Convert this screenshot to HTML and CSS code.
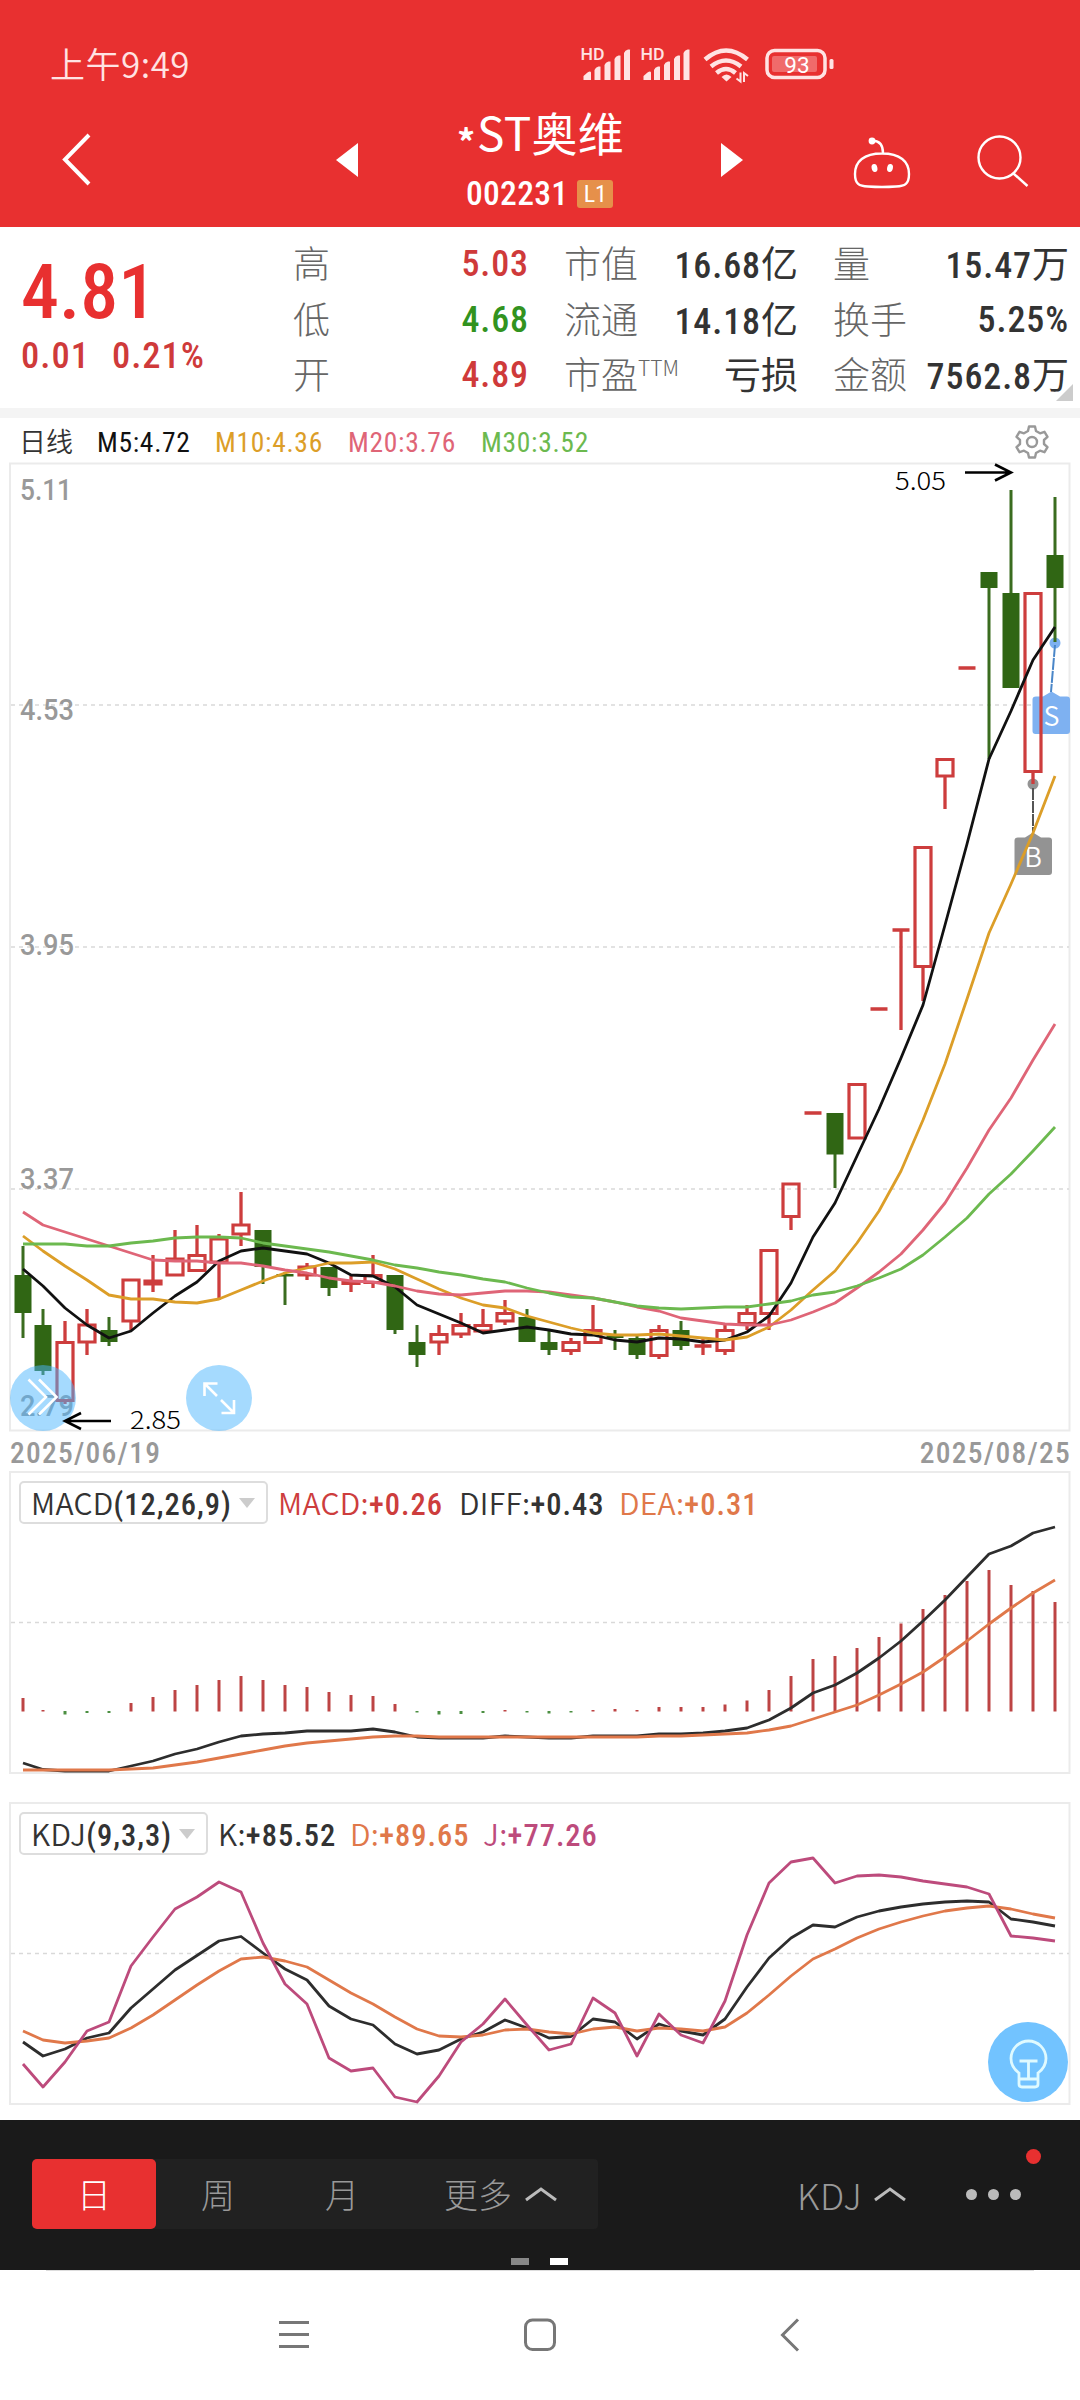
FILE: index.html
```html
<!DOCTYPE html>
<html lang="zh-CN">
<head>
<meta charset="utf-8">
<title>*ST奥维 002231</title>
<link rel="stylesheet" href="styles.css">
</head>
<body>
<header class="header">
  <div class="status">
    <span class="clock">上午9:49</span>
    <svg class="status-icons" width="256" height="40" viewBox="580 44 256 40">
      <g fill="#ffe3e3">
        <text class="hd" x="580.500" y="60" textLength="24" lengthAdjust="spacingAndGlyphs">HD</text>
        <text class="hd" x="640.500" y="60" textLength="24" lengthAdjust="spacingAndGlyphs">HD</text>
        <path transform="translate(3.500 0)" d="M580 80v-4l4-3.500q3-2 3.500 0v7.500zM591 80v-10q1-3 4-3.500t2 1v12.500zM601 80v-15q1-3 4-3.500t2 1v17.500zM611 80v-21q1-3 4-3.500t2 1v23.500zM620.500 80v-27q1-3 4-3.500t2 1v29.500z"/>
        <path transform="translate(5 0)" d="M638.500 80v-4l4-3.500q3-2 3.500 0v7.500zM649 80v-10q1-3 4-3.500t2 1v12.500zM659 80v-15q1-3 4-3.500t2 1v17.500zM669 80v-21q1-3 4-3.500t2 1v23.500zM678.500 80v-27q1-3 4-3.500t2 1v29.500z"/>
        <path d="M721.500 77q5-5 10 0l-5 4.500z"/>
      </g>
      <g transform="translate(-.5 0)" fill="none" stroke="#ffe3e3">
        <path stroke-width="4.500" d="M705.500 59.500q21-18 42.500 0M711.500 66.500q15-12 30 0M717 73q9.500-8 19 0"/>
        <path stroke-width="2" d="M741 72.500v9l-4-3M744.500 82v-9l4 3"/>
        <rect x="767.500" y="50.500" width="58" height="27" rx="7.500" stroke-width="3.500"/>
      </g>
      <rect x="772" y="56" width="45" height="16" rx="2" fill="#f06b6b"/>
      <rect x="829.500" y="59" width="4" height="10" rx="1.500" fill="#ffe3e3"/>
      <text class="batt" x="797" y="73" text-anchor="middle">93</text>
    </svg>
  </div>
  <div class="titlebar">
    <svg class="back" width="40" height="60" viewBox="56 130 40 60"><path d="M89 135 65 159.500 89 184" fill="none" stroke="#fff" stroke-width="4"/></svg>
    <svg class="tri" width="22" height="36" viewBox="0 0 22 36"><path d="M22 1v34L0 18z" fill="#fff"/></svg>
    <div class="title">
      <div class="name"><b>*</b>ST奥维</div>
      <div class="code"><span>002231</span><i>L1</i></div>
    </div>
    <svg class="tri" width="22" height="36" viewBox="0 0 22 36"><path d="M0 1v34l22-17z" fill="#fff"/></svg>
    <svg class="tools" width="180" height="60" viewBox="850 132 180 60" fill="none" stroke="#fff" stroke-width="2.400">
      <path d="M882 153.500c18 0 27 8 27 20.500 0 10-4 12-13 12.500q-14 1-28 0c-9-.5-13-2.500-13-12.500 0-12.500 9-20.500 27-20.500zM883 153c0-8-3-12-10-12.500"/>
      <circle cx="872" cy="141" r="3.400" fill="#fff" stroke="none"/>
      <ellipse cx="874.500" cy="168" rx="2.900" ry="4" transform="rotate(-12 874.500 168)" fill="#fff" stroke="none"/>
      <ellipse cx="890" cy="168" rx="2.900" ry="4" transform="rotate(12 890 168)" fill="#fff" stroke="none"/>
      <circle cx="999.500" cy="157.500" r="21"/><path d="m1013.500 173.500 14 12.500"/>
    </svg>
  </div>
</header>

<section class="quote">
  <div class="price">
    <div class="last">4.81</div>
    <div class="change"><span>0.01</span><span>0.21%</span></div>
  </div>
  <dl class="stats c1">
    <div><dt>高</dt><dd class="up">5.03</dd></div>
    <div><dt>低</dt><dd class="down">4.68</dd></div>
    <div><dt>开</dt><dd class="up">4.89</dd></div>
  </dl>
  <dl class="stats c2">
    <div><dt>市值</dt><dd>16.68<em>亿</em></dd></div>
    <div><dt>流通</dt><dd>14.18<em>亿</em></dd></div>
    <div><dt>市盈<sup>TTM</sup></dt><dd><em>亏损</em></dd></div>
  </dl>
  <dl class="stats c3">
    <div><dt>量</dt><dd>15.47<em>万</em></dd></div>
    <div><dt>换手</dt><dd>5.25%</dd></div>
    <div><dt>金额</dt><dd>7562.8<em>万</em></dd></div>
  </dl>
  <span class="corner"></span>
</section>

<div class="legend">
  <span class="period">日线</span><span class="m5">M5:4.72</span><span class="m10">M10:4.36</span><span class="m20">M20:3.76</span><span class="m30">M30:3.52</span>
  <svg class="gear" width="36" height="36" viewBox="0 0 36 36" fill="none" stroke="#999" stroke-width="2.400" stroke-linejoin="round"><path d="M15 2.500h6l1 4.500 4 2.300 4.500-1.500 3 5-3.500 3.200v4l3.500 3.200-3 5-4.500-1.500-4 2.300-1 4.500h-6l-1-4.500-4-2.300-4.500 1.500-3-5L6 20v-4l-3.500-3.200 3-5L10 9.300 14 7z"/><circle cx="18" cy="18" r="5"/></svg>
</div>

<svg class="kline" width="1080" height="970" viewBox="0 462 1080 970">
  <rect class="frame" x="10" y="463.500" width="1059.500" height="967"/>
  <path class="grid" d="M11 705H1069M11 947H1069M11 1189H1069"/>
  <g class="axis">
    <text x="20" y="500" textLength="52" lengthAdjust="spacingAndGlyphs">5.11</text>
    <text x="20" y="719.500" textLength="54" lengthAdjust="spacingAndGlyphs">4.53</text>
    <text x="20" y="954.500" textLength="54" lengthAdjust="spacingAndGlyphs">3.95</text>
    <text x="20" y="1188.500" textLength="54" lengthAdjust="spacingAndGlyphs">3.37</text>
    <text x="20" y="1416" textLength="54" lengthAdjust="spacingAndGlyphs">2.79</text>
  </g>
  <g class="marker">
    <path fill="#7eb1f1" d="M1036 696.500h7l8.500-5 8.500 5h7q3 0 3 3v31.500q0 3-3 3h-31.500q-3 0-3-3v-31.500q0-3 3.500-3z"/>
    <path fill="#939393" d="M1018 837.500h7l8-5 8 5h8q3 0 3 3v31.500q0 3-3 3h-31.500q-3 0-3-3v-31.500q0-3 3.500-3z"/>
    <circle cx="1055" cy="643" r="5.500" fill="#7eb1f1"/><circle cx="1033" cy="784" r="5.500" fill="#939393"/>
    <path d="M1055 645 1051 692" stroke="#4a86c8" stroke-width="2" stroke-dasharray="12 1"/>
    <path d="M1033 788V833" stroke="#555" stroke-width="2" stroke-dasharray="12 1"/>
    <text x="1051.500" y="726">S</text><text x="1033" y="867">B</text>
  </g>
  <path class="gw" d="M23 1246V1338M43 1309V1375M109 1317V1346M263 1230V1284M285 1272V1305M329 1267V1296M395 1275V1334M417 1325V1367M527 1309V1342M549 1330V1355M615 1330V1350M637 1336V1359M681 1321V1350M835 1113V1188M989 572V759M1011 490V688M1055 497V642"/>
  <path class="gb" d="M14.500 1275h17v38h-17zM34.500 1325h17v46h-17zM100.500 1330h17v12h-17zM254.500 1230h17v37h-17zM276.500 1274h17v2.500h-17zM320.500 1267h17v21h-17zM386.500 1275h17v55h-17zM408.500 1342h17v13h-17zM518.500 1317h17v25h-17zM540.500 1342h17v8h-17zM606.500 1335.500h17v2.500h-17zM628.500 1338h17v17h-17zM672.500 1330h17v16h-17zM826.500 1113h17v41.500h-17zM980.500 572h17v16h-17zM1002.500 593h17v95h-17zM1046.500 555h17v33h-17z"/>
  <path class="rw" d="M65 1321V1342M65 1401V1404M87 1309V1325M87 1342V1355M131 1321V1330M153 1255V1292M175 1230V1259M197 1225V1255M219 1234V1239M219 1262V1300M241 1192V1225M241 1234V1246M307 1263V1267M307 1275V1280M351 1276V1292M373 1255V1275M373 1284V1288M439 1325V1334M439 1342V1355M461 1313V1325M461 1334V1338M483 1309V1325M505 1300V1313M505 1321V1325M571 1338V1342M571 1351V1355M593 1305V1330M659 1325V1330M659 1355V1359M703 1339V1355M725 1325V1330M725 1351V1355M747 1305V1313M747 1324V1330M769 1313V1330M791 1217V1230M901 930V1030M923 967V1001M945 777V809M1033 772V784"/>
  <path class="rb" d="M57 1342.500h16v58h-16zM79 1325h16v17h-16zM123 1280h16v41h-16zM145 1281h16v3h-16zM167 1259h16v16h-16zM189 1255.500h16v15h-16zM211 1239h16v23h-16zM233 1225h16v9h-16zM299 1267h16v8h-16zM343 1281.500h16v2h-16zM365 1275.500h16v7h-16zM431 1334.500h16v7.500h-16zM453 1325.500h16v8.500h-16zM475 1325.500h16v5.500h-16zM497 1313.500h16v7.500h-16zM563 1342.500h16v8h-16zM585 1330.500h16v12h-16zM651 1330.500h16v25h-16zM717 1330.500h16v20h-16zM739 1313.500h16v10h-16zM761 1250.500h16v63h-16zM783 1184h16v32.500h-16zM849 1084.500h16v53.500h-16zM915 847.500h16v119h-16zM937 759.500h16v16.500h-16zM1025 593.500h16v178h-16z"/>
  <path class="rd" d="M694.500 1346h17M804.500 1113h17M870.500 1009h17M892.500 930h17M958.500 668h17"/>
  <polyline class="ln l5" points="23,1269 43,1286 65,1308 87,1325 109,1338 131,1331 153,1313 175,1296 197,1282 219,1261 241,1251 263,1248 285,1251 307,1254 329,1263 351,1275 373,1276 395,1287 417,1305 439,1314 461,1323 483,1333 505,1330 527,1327 549,1330 571,1334 593,1335 615,1340 637,1342 659,1338 681,1339 703,1342 725,1340 747,1332 769,1316 791,1283 813,1237 835,1203 857,1156 879,1109 901,1058 923,1005 945,925 967,844 989,759 1011,711 1033,660 1055,627"/>
  <polyline class="ln l10" points="23,1236 43,1251 65,1266 87,1280 109,1295 131,1299 153,1299 175,1302 197,1303 219,1299 241,1290 263,1281 285,1273 307,1268 329,1263 351,1263 373,1262 395,1269 417,1279 439,1289 461,1298 483,1305 505,1308 527,1316 549,1322 571,1328 593,1333 615,1335 637,1335 659,1334 681,1336 703,1338 725,1340 747,1337 769,1327 791,1310 813,1290 835,1271 857,1243 879,1211 901,1171 923,1120 945,1064 967,999 989,933 1011,884 1033,833 1055,776"/>
  <polyline class="ln l20" points="23,1212 43,1225 65,1232 87,1239 109,1246 131,1253 153,1260 175,1261 197,1261 219,1263 241,1263 263,1266 285,1270 307,1273 329,1278 351,1281 373,1282 395,1286 417,1291 439,1294 461,1295 483,1293 505,1291 527,1291 549,1292 571,1295 593,1298 615,1302 637,1307 659,1311 681,1318 703,1321 725,1324 747,1325 769,1325 791,1320 813,1312 835,1303 857,1288 879,1272 901,1254 923,1230 945,1203 967,1168 989,1130 1011,1098 1033,1060 1055,1024"/>
  <polyline class="ln l30" points="23,1244 65,1244 87,1246 109,1246 131,1243 153,1241 175,1238 197,1237 219,1237 241,1238 263,1243 285,1246 307,1249 329,1252 351,1256 373,1260 395,1265 417,1268 439,1272 461,1275 483,1279 505,1282 527,1288 549,1293 571,1297 593,1298 615,1302 637,1306 659,1308 681,1309 703,1308 725,1307 747,1307 769,1304 791,1301 813,1295 835,1292 857,1286 879,1278 901,1269 923,1255 945,1237 967,1218 989,1194 1011,1174 1033,1151 1055,1127"/>
  <g fill="rgba(75,181,253,.5)"><circle cx="43" cy="1398" r="33"/><circle cx="219" cy="1398" r="33"/></g>
  <path d="M28.500 1379.500 46 1397 28.500 1414.500M39 1379.500 56.500 1397 39 1414.500M217 1396 204.500 1383.500M204.500 1396V1383.500H217.500M221 1400 234 1413M221.500 1413H234V1400" fill="none" stroke="#fff" stroke-width="2.600"/>
  <path d="M965 472.500H1010M995 464.500 1011 472.500 995 480.500M111 1421H67M81 1413 65 1421 81 1429" fill="none" stroke="#000" stroke-width="2.600"/>
  <g class="extreme">
    <text x="895" y="490" textLength="51" lengthAdjust="spacingAndGlyphs">5.05</text>
    <text x="130" y="1428.500" textLength="51" lengthAdjust="spacingAndGlyphs">2.85</text>
  </g>
</svg>

<div class="dates"><span>2025/06/19</span><span>2025/08/25</span></div>

<section class="panel">
  <svg class="plot" width="1080" height="303" viewBox="0 1471 1080 303">
    <rect class="frame" x="10" y="1472" width="1059.500" height="301"/>
    <path class="grid" d="M11 1622.500H1069"/>
    <path class="hr" d="M23 1711.500V1698M43 1711.500V1710M131 1711.500V1703M153 1711.500V1697M175 1711.500V1690M197 1711.500V1685M219 1711.500V1680M241 1711.500V1676M263 1711.500V1680M285 1711.500V1685M307 1711.500V1687M329 1711.500V1692M351 1711.500V1695M373 1711.500V1696M395 1711.500V1704M505 1711.500V1710M593 1711.500V1710M615 1711.500V1709M637 1711.500V1710M659 1711.500V1707M681 1711.500V1707M703 1711.500V1707M725 1711.500V1704.500M747 1711.500V1700.500M769 1711.500V1690M791 1711.500V1676M813 1711.500V1659M835 1711.500V1656M857 1711.500V1648M879 1711.500V1637M901 1711.500V1623.500M923 1711.500V1609M945 1711.500V1595M967 1711.500V1581M989 1711.500V1570M1011 1711.500V1585M1033 1711.500V1591M1055 1711.500V1602"/>
    <path class="hg" d="M65 1711V1714.500M87 1711V1713M109 1711V1713M417 1711V1712.500M439 1711V1714.500M461 1711V1714M483 1711V1713M527 1711V1712.500M549 1711V1713.500M571 1711V1712.500"/>
    <polyline class="ln dk" points="23,1763 43,1769.500 65,1771 109,1771 131,1766 153,1761 175,1754 197,1749 219,1742 241,1736 263,1734 285,1733 307,1731 351,1731 373,1729 395,1732 417,1737 439,1738 483,1738 505,1736 527,1737 549,1738 571,1738 593,1736 637,1736 659,1734 681,1734 703,1733 725,1731 747,1728 769,1720 791,1708 813,1693 835,1685 857,1673 879,1658 901,1641 923,1621 945,1600 967,1577 989,1554 1011,1546 1033,1533 1055,1527"/>
    <polyline class="ln or" points="23,1770 109,1770 131,1769 153,1768 175,1765 197,1762 219,1758 241,1754 263,1750 285,1746 307,1743 329,1741 351,1739 373,1737 395,1736 417,1736 439,1737 637,1737 659,1736 681,1736 703,1735 725,1734 747,1733 769,1730 791,1726 813,1719 835,1712 857,1705 879,1695 901,1684 923,1672 945,1657 967,1641 989,1624 1011,1608 1033,1593 1055,1580"/>
  </svg>
  <div class="readout">
    <span class="select" style="width:249px"><span>MACD<b>(12,26,9)</b></span></span>
    <span class="v1 red">MACD:<b>+0.26</b></span><span class="v2">DIFF:<b>+0.43</b></span><span class="v3 orange">DEA:<b>+0.31</b></span>
  </div>
</section>

<section class="panel kdj">
  <svg class="plot" width="1080" height="303" viewBox="0 1802 1080 303">
    <rect class="frame" x="10" y="1803" width="1059.500" height="301"/>
    <path class="grid" d="M11 1953.500H1069"/>
    <polyline class="ln dk" points="23,2042 43,2056 65,2049 87,2038 109,2033 131,2008 153,1989 175,1970 197,1955.500 219,1941 241,1936.500 263,1953 285,1969 307,1980 329,2006 351,2019 373,2025 395,2044 417,2054 439,2050 461,2039 483,2032 505,2020 527,2028 549,2038 571,2036.500 593,2019 615,2022 637,2039 659,2024 681,2031 703,2035 725,2019 747,1987 769,1958 791,1938 813,1925 835,1927 857,1917 879,1911 901,1907 923,1904 945,1902 967,1901 989,1902 1011,1919 1033,1922 1055,1926"/>
    <polyline class="ln or" points="23,2031 43,2040 65,2043 87,2041 109,2038 131,2028 153,2015 175,2000 197,1985 219,1971 241,1959 263,1957 285,1961 307,1967 329,1980 351,1993 373,2004 395,2017 417,2029 439,2036 461,2037 483,2035 505,2030 527,2029 549,2032 571,2034 593,2029 615,2027 637,2031 659,2028 681,2029 703,2031 725,2027 747,2013 769,1995 791,1976 813,1959 835,1949 857,1938 879,1929 901,1922 923,1916 945,1911 967,1908 989,1906 1011,1909 1033,1914 1055,1918"/>
    <polyline class="ln pu" points="23,2064 43,2087 65,2062 87,2031 109,2022 131,1966 153,1937 175,1909 197,1897 219,1882 241,1892 263,1943 285,1984 307,2004 329,2058 351,2071 373,2068 395,2097 417,2102 439,2076 461,2042 483,2024 505,1999 527,2025 549,2050 571,2044 593,1998 615,2013 637,2056 659,2014 681,2035 703,2043 725,2001 747,1935 769,1883 791,1862 813,1858 835,1883 857,1876 879,1875 901,1877 923,1881 945,1884 967,1887 989,1894 1011,1936 1033,1938 1055,1941"/>
    <circle cx="1028" cy="2062" r="40" fill="#72c3ff"/>
    <path d="M1019 2084v-11c-4-3-8-8-8-14.500a17.500 17.500 0 0 1 35 0c0 6.500-4 11.500-8 14.500v11q0 3-3 3h-13q-3 0-3-3zM1020 2079h17M1019.500 2061h18M1028.500 2061v17" fill="none" stroke="#dffaff" stroke-width="2.800"/>
  </svg>
  <div class="readout">
    <span class="select" style="width:189px"><span>KDJ<b>(9,3,3)</b></span></span>
    <span class="k1">K:<b>+85.52</b></span><span class="k2 orange">D:<b>+89.65</b></span><span class="k3 purple">J:<b>+77.26</b></span>
  </div>
</section>

<nav class="toolbar">
  <div class="segments">
    <span class="on">日</span><span>周</span><span>月</span>
    <span class="more">更多<svg width="34" height="16" viewBox="0 0 34 16"><path d="M2 14 17 3 32 14" fill="none" stroke="#bbb" stroke-width="3"/></svg></span>
  </div>
  <span class="indicator"><span>KDJ</span><svg width="34" height="16" viewBox="0 0 34 16"><path d="M2 14 17 3 32 14" fill="none" stroke="#bbb" stroke-width="3"/></svg></span>
  <span class="dots"><i></i><i></i><i></i></span>
  <span class="badge"></span>
  <div class="pager"><i></i><i></i></div>
</nav>
<footer class="sysnav">
  <svg width="1080" height="130" viewBox="0 2270 1080 130" fill="none" stroke="#777" stroke-width="3">
    <path d="M46 2270.500H1034" stroke="#ddd" stroke-width="1"/>
    <path d="M279 2322.500H309M279 2334.500H309M279 2346.500H309"/>
    <rect x="525.500" y="2320" width="29" height="29.500" rx="7"/>
    <path d="M798 2319.500 782.500 2335 798 2350.500"/>
  </svg>
</footer>
</body>
</html>
```

FILE: styles.css
```css
* { box-sizing: border-box; }
body {
  margin: 0;
  width: 1080px;
  height: 2400px;
  background: #fff;
  color: #333;
  font-family: Roboto, "Noto Sans CJK SC", sans-serif;
  font-stretch: 87%;
  overflow: hidden;
}
svg { display: block; flex: none; }
i, b, em { font-style: normal; }

.header { height: 227px; background: #e83030; color: #fff; }
.status { height: 104px; padding: 44px 0 0 50px; display: flex; }
.clock { width: 530px; margin-top: -1px; font: 350 35px/40px "Noto Sans CJK SC", sans-serif; color: #ffe3e3; letter-spacing: .5px; }
.status-icons { overflow: visible; }
.hd { font: 500 17px Roboto, sans-serif; }
.batt { font: 400 22.500px Roboto, sans-serif; fill: #fff; }
.titlebar { height: 123px; display: flex; }
.back { margin: 26px 240px 0 56px; }
.tri { margin-top: 38px; }
.title { width: 363px; }
.name { height: 58px; font: 400 46px/52px "Noto Sans CJK SC", sans-serif; letter-spacing: .3px; white-space: nowrap; padding: 1px 0 0 99px; }
.name b { display: inline-block; width: 20px; font-weight: 700; font-size: 36px; line-height: 40px; vertical-align: -5px; }
.code { display: flex; align-items: center; gap: 9px; padding-left: 108px; height: 46px; margin-top: 9px; }
.code span { font-size: 33.500px; line-height: 46px; font-weight: 500; letter-spacing: .3px; }
.code i { width: 36px; height: 28px; border-radius: 3px; background: #e6904a; font: 400 24px/29px Roboto; font-stretch: 87%; text-align: center; }
.tools { margin: 28px 0 0 107px; }

.quote { position: relative; height: 191px; padding-top: 9px; border-bottom: 10px solid #f4f4f4; display: flex; }
.price { width: 293px; padding: 11px 0 0 21px; color: #e83030; }
.last { height: 88px; font-size: 76px; line-height: 90px; font-weight: 500; }
.change { display: flex; gap: 22px; font-size: 36.500px; line-height: 42px; font-weight: 500; letter-spacing: 1px; color: #cf3a3a; }
.stats { margin: 0; }
.stats div { display: flex; justify-content: space-between; height: 55.500px; line-height: 55.500px; white-space: nowrap; }
.stats dt { font: 300 37px/53px "Noto Sans CJK SC", sans-serif; color: #666; }
.stats dd { margin: 0; padding-top: 1px; font-size: 36px; font-weight: 500; letter-spacing: .9px; }
.stats em { font: 400 37px/50px "Noto Sans CJK SC", sans-serif; letter-spacing: 0; }
.c1 { width: 236px; margin-right: 35px; }
.c2 { width: 234px; margin-right: 35px; }
.c3 { width: 236px; }
.up { color: #cf3a3a; }
.down { color: #32931f; }
sup { font-size: 21px; line-height: 0; vertical-align: 13px; }
.corner { position: absolute; right: 7px; bottom: 7px; border-style: solid; border-width: 0 0 17px 17px; border-color: transparent transparent #ccc; }

.legend { height: 44px; padding-left: 19px; display: flex; align-items: center; font-size: 27.500px; letter-spacing: .7px; white-space: nowrap; }
.legend span { width: 133px; line-height: 44px; padding-top: 5px; }
.legend .period { width: 78px; padding-top: 2px; font: 350 27px/44px "Noto Sans CJK SC", sans-serif; letter-spacing: 0; }
.legend .m5 { width: 118px; color: #111; }
.m10 { color: #dc9e28; }
.m20 { color: #df6577; }
.m30 { color: #6cb94f; }
.gear { margin: 4px 0 0 400px; }

.kline { overflow: visible; }
.frame { fill: none; stroke: #ebebeb; stroke-width: 2; }
.grid { stroke: #d9d9d9; stroke-width: 1.600; stroke-dasharray: 4 4; fill: none; }
.axis text { font: 500 29.500px Roboto, sans-serif; fill: #999; }
.extreme text { font: 300 25px "Noto Sans CJK SC", sans-serif; fill: #000; }
.marker text { font: 350 27px "Noto Sans CJK SC", sans-serif; fill: #fff; text-anchor: middle; }
.gw { stroke: #3a6c1f; stroke-width: 3; fill: none; }
.gb { fill: #306614; }
.rw { stroke: #cd3d3d; stroke-width: 3.300; fill: none; }
.rb { stroke: #cd3d3d; stroke-width: 3.200; fill: none; }
.rd { stroke: #cd3d3d; stroke-width: 3.300; fill: none; }
.ln { fill: none; stroke-width: 2.800; stroke-linejoin: round; }
.l5 { stroke: #111; }
.l10 { stroke: #dc9e28; }
.l20 { stroke: #df6577; }
.l30 { stroke: #6cb94f; }
.dk { stroke: #2d2d2d; }
.or { stroke: #e0784a; }
.pu { stroke: #bd4b7c; }
.hr { stroke: #bd4444; stroke-width: 3; }
.hg { stroke: #4c8f42; stroke-width: 3; }

.dates { height: 39px; padding: 2px 9px 0 10px; display: flex; justify-content: space-between; font-size: 29.500px; line-height: 38px; font-weight: 500; letter-spacing: 1.250px; color: #999; }

.panel { height: 303px; display: grid; }
.kdj { margin-top: 28px; }
.plot, .readout { grid-area: 1 / 1; }
.readout { display: flex; align-items: flex-start; padding: 10px 0 0 19px; font: 350 30px/42px "Noto Sans CJK SC", sans-serif; letter-spacing: .3px; white-space: nowrap; }
.readout b { font: 500 30.500px Roboto; font-stretch: 87%; letter-spacing: 1px; }
.select { height: 43px; padding: 0 11px 0 10px; border: 2px solid #ddd; border-radius: 5px; line-height: 38px; display: flex; align-items: center; justify-content: space-between; }
.select::after { content: ""; border: 8px solid transparent; border-top: 10px solid #ccc; border-bottom: 0; }
.v1 { margin-left: 10px; width: 181px; }
.v2 { width: 160px; }
.k1 { margin-left: 10px; width: 132px; }
.k2 { width: 133px; }
.red { color: #cd3d3d; }
.orange { color: #e0784a; }
.purple { color: #bd4b7c; }

.toolbar { position: relative; height: 150px; margin-top: 15px; padding: 39px 0 0 32px; background: #1a1a1a; color: #999; display: flex; font: 300 34px/70px "Noto Sans CJK SC", sans-serif; }
.segments { width: 566px; height: 70px; display: flex; border-radius: 4px; background: #212121; text-align: center; }
.segments > span { width: 124px; }
.segments .on { border-radius: 5px; background: #e83030; color: #fff; }
.segments .more { width: 194px; display: flex; align-items: center; padding-left: 40px; gap: 12px; }
.indicator { margin-left: 199px; width: 169px; display: flex; align-items: center; height: 70px; font-size: 36px; letter-spacing: .5px; }
.indicator span { width: 76px; }
.dots { display: flex; gap: 11px; align-items: center; height: 70px; }
.dots i { width: 11px; height: 11px; border-radius: 50%; background: #bbb; }
.badge { position: absolute; left: 1026px; top: 29px; width: 15px; height: 15px; border-radius: 50%; background: #e83030; }
.pager { position: absolute; left: 511px; top: 138px; display: flex; gap: 21px; }
.pager i { width: 18px; height: 7px; background: #888; }
.pager i + i { background: #fff; }
.sysnav { height: 130px; }
```
